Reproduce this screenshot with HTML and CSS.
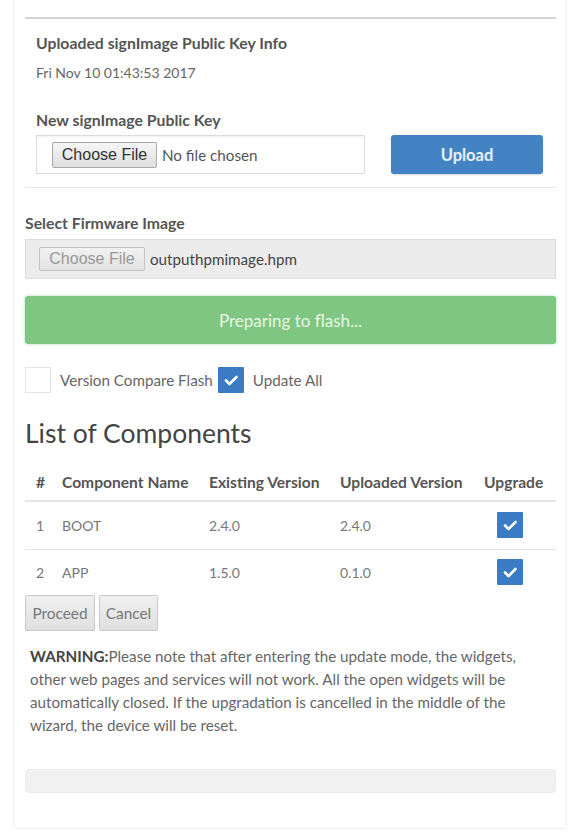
FILE: index.html
```html
<!DOCTYPE html>
<html lang="en">
<head>
<meta charset="utf-8">
<title>Firmware Update</title>
<link rel="stylesheet" href="styles.css">
</head>
<body>
<div class="panel">
  <section class="key-section">
    <div class="label">Uploaded signImage Public Key Info</div>
    <div class="date">Fri Nov 10 01:43:53 2017</div>
    <div class="label label-new">New signImage Public Key</div>
    <div class="key-row">
      <div class="file-box">
        <span class="file-btn">Choose File</span>
        <span class="file-name">No file chosen</span>
      </div>
      <button class="upload-btn">Upload</button>
    </div>
  </section>

  <div class="label fw-label">Select Firmware Image</div>
  <div class="fw-box">
    <span class="file-btn file-btn-disabled">Choose File</span>
    <span class="file-name fw-name">outputhpmimage.hpm</span>
  </div>

  <div class="progress">Preparing to flash...</div>

  <div class="check-row">
    <span class="cb cb-empty"></span>
    <span class="check-text">Version Compare Flash</span>
    <span class="cb cb-on"><svg viewBox="0 0 26 26" width="26" height="26"><path d="M8 13.5 L11.5 17 L18.5 10" fill="none" stroke="#fff" stroke-width="2.6" stroke-linecap="round" stroke-linejoin="round"/></svg></span>
    <span class="check-text">Update All</span>
  </div>

  <h2 class="title">List of Components</h2>

  <table class="comp-table">
    <thead>
      <tr>
        <th class="c-num">#</th>
        <th class="c-name">Component Name</th>
        <th class="c-ex">Existing Version</th>
        <th class="c-up">Uploaded Version</th>
        <th class="c-upg">Upgrade</th>
      </tr>
    </thead>
    <tbody>
      <tr>
        <td class="c-num">1</td>
        <td class="c-name">BOOT</td>
        <td class="c-ex">2.4.0</td>
        <td class="c-up">2.4.0</td>
        <td class="c-upg"><span class="cb cb-on"><svg viewBox="0 0 26 26" width="26" height="26"><path d="M8 13.5 L11.5 17 L18.5 10" fill="none" stroke="#fff" stroke-width="2.6" stroke-linecap="round" stroke-linejoin="round"/></svg></span></td>
      </tr>
      <tr class="last">
        <td class="c-num">2</td>
        <td class="c-name">APP</td>
        <td class="c-ex">1.5.0</td>
        <td class="c-up">0.1.0</td>
        <td class="c-upg"><span class="cb cb-on"><svg viewBox="0 0 26 26" width="26" height="26"><path d="M8 13.5 L11.5 17 L18.5 10" fill="none" stroke="#fff" stroke-width="2.6" stroke-linecap="round" stroke-linejoin="round"/></svg></span></td>
      </tr>
    </tbody>
  </table>

  <div class="actions">
    <button class="btn btn-proceed">Proceed</button>
    <button class="btn btn-cancel">Cancel</button>
  </div>

  <p class="warning"><b>WARNING:</b>Please note that after entering the update mode, the widgets,<br>other web pages and services will not work. All the open widgets will be<br>automatically closed. If the upgradation is cancelled in the middle of the<br>wizard, the device will be reset.</p>

  <div class="bottom-bar"></div>
</div>
</body>
</html>
```

FILE: styles.css
```css
* { box-sizing: border-box; }

html, body {
  margin: 0;
  padding: 0;
  background: #ffffff;
}

body {
  font-family: Lato, "Open Sans", sans-serif;
  color: #555;
  width: 570px;
  height: 834px;
  overflow: hidden;
}

.panel {
  margin-left: 13px;
  width: 554px;
  height: 829px;
  border-left: 1px solid #f0f0f0;
  border-right: 1px solid #f0f0f0;
  border-bottom: 1px solid #ededed;
  border-radius: 0 0 4px 4px;
  padding: 17px 10px 0 11px;
  display: flex;
  flex-direction: column;
}

.key-section {
  border-top: 2px solid #d5d5d5;
  border-bottom: 1px solid #e8e8e8;
  padding: 15px 0 13px 11px;
  display: flex;
  flex-direction: column;
}

.label {
  font-size: 15.8px;
  font-weight: 700;
  line-height: 18px;
  color: #555;
}

.date {
  margin-top: 12px;
  font-size: 14px;
  line-height: 18px;
  color: #666;
}

.label-new { margin-top: 29px; }

.key-row {
  margin-top: 6px;
  display: flex;
  align-items: stretch;
  height: 39px;
}

.file-box {
  width: 329px;
  border: 1px solid #dcdcdc;
  box-shadow: inset 0 1px 2px rgba(0,0,0,0.06);
  display: flex;
  align-items: center;
  padding-left: 15px;
}

.file-btn {
  display: inline-flex;
  align-items: center;
  justify-content: center;
  width: 105px;
  height: 26px;
  border: 1px solid #a8a8a8;
  border-radius: 2px;
  background: linear-gradient(#f6f6f6, #dedede);
  font-family: "Liberation Sans", Arial, sans-serif;
  font-size: 16px;
  color: #333;
}

.file-name {
  margin-left: 5px;
  font-size: 15.2px;
  color: #555;
}

.upload-btn {
  margin-left: 26px;
  width: 152px;
  border: none;
  border-radius: 3px;
  background: #4483c3;
  box-shadow: 0 1px 2px rgba(0,0,0,0.15);
  color: #e9f1fa;
  font-family: Lato, sans-serif;
  font-size: 16.5px;
  font-weight: 700;
}

.fw-label {
  margin-top: 26px;
}

.fw-box {
  margin-top: 7px;
  height: 40px;
  background: #ececec;
  border: 1px solid #dddddd;
  display: flex;
  align-items: center;
  padding-left: 13px;
}

.file-btn-disabled {
  width: 106px;
  height: 24px;
  color: #9a9a9a;
  font-size: 16px;
  border-color: #c4c4c4;
  background: linear-gradient(#f2f2f2, #e2e2e2);
}

.fw-name { color: #444; }

.progress {
  margin-top: 17px;
  height: 48px;
  background: #7ec681;
  border-radius: 3px;
  box-shadow: 0 0 3px rgba(110,190,110,0.6);
  display: flex;
  align-items: center;
  justify-content: center;
  color: #eaf6e2;
  font-size: 17px;
}

.check-row {
  margin-top: 23px;
  height: 26px;
  display: flex;
  align-items: center;
}

.cb {
  display: inline-flex;
  width: 26px;
  height: 26px;
  flex: none;
}

.cb-empty {
  border: 1px solid #e4e4e4;
  background: #fff;
}

.cb-on {
  background: #3a7bc3;
  border-radius: 1px;
}

.check-text {
  font-size: 15.2px;
  color: #666;
  margin-left: 9px;
  margin-right: 5px;
}

.title {
  margin: 25px 0 0 0;
  font-size: 26.5px;
  font-weight: 400;
  line-height: 30px;
  color: #444;
}

.comp-table {
  margin-top: 16px;
  border-collapse: collapse;
  width: 531px;
  font-size: 14px;
}

.comp-table th {
  text-align: left;
  font-size: 15.6px;
  font-weight: 700;
  color: #555;
  height: 37px;
  border-bottom: 2px solid #e6e6e6;
  padding: 0;
  white-space: nowrap;
}

.comp-table td {
  height: 48px;
  border-bottom: 1px solid #e6e6e6;
  color: #777;
  padding: 0;
}

.comp-table tr.last td {
  border-bottom: none;
  height: 46px;
}

.c-num { width: 37px; padding-left: 11px !important; }
.c-name { width: 147px; }
.c-ex { width: 131px; }
.c-up { width: 144px; }
.c-upg { text-align: left; }
.comp-table td.c-upg .cb { margin-left: 13px; vertical-align: middle; }

.actions {
  display: flex;
  gap: 4px;
  height: 36px;
}

.btn {
  height: 36px;
  border: 1px solid #c9c9c9;
  border-radius: 2px;
  background: linear-gradient(#f0f0f0, #e0e0e0);
  font-family: Lato, sans-serif;
  font-size: 15.4px;
  color: #777;
  padding: 0;
}

.btn-proceed { width: 70px; }
.btn-cancel { width: 59px; }

.warning {
  margin: 14px 0 0 5px;
  font-size: 15.2px;
  line-height: 23px;
  color: #666;
  white-space: nowrap;
}

.warning b { color: #444; }

.bottom-bar {
  margin-top: 32px;
  height: 24px;
  background: #f1f1f1;
  border: 1px solid #ececec;
  border-radius: 4px;
}
```
